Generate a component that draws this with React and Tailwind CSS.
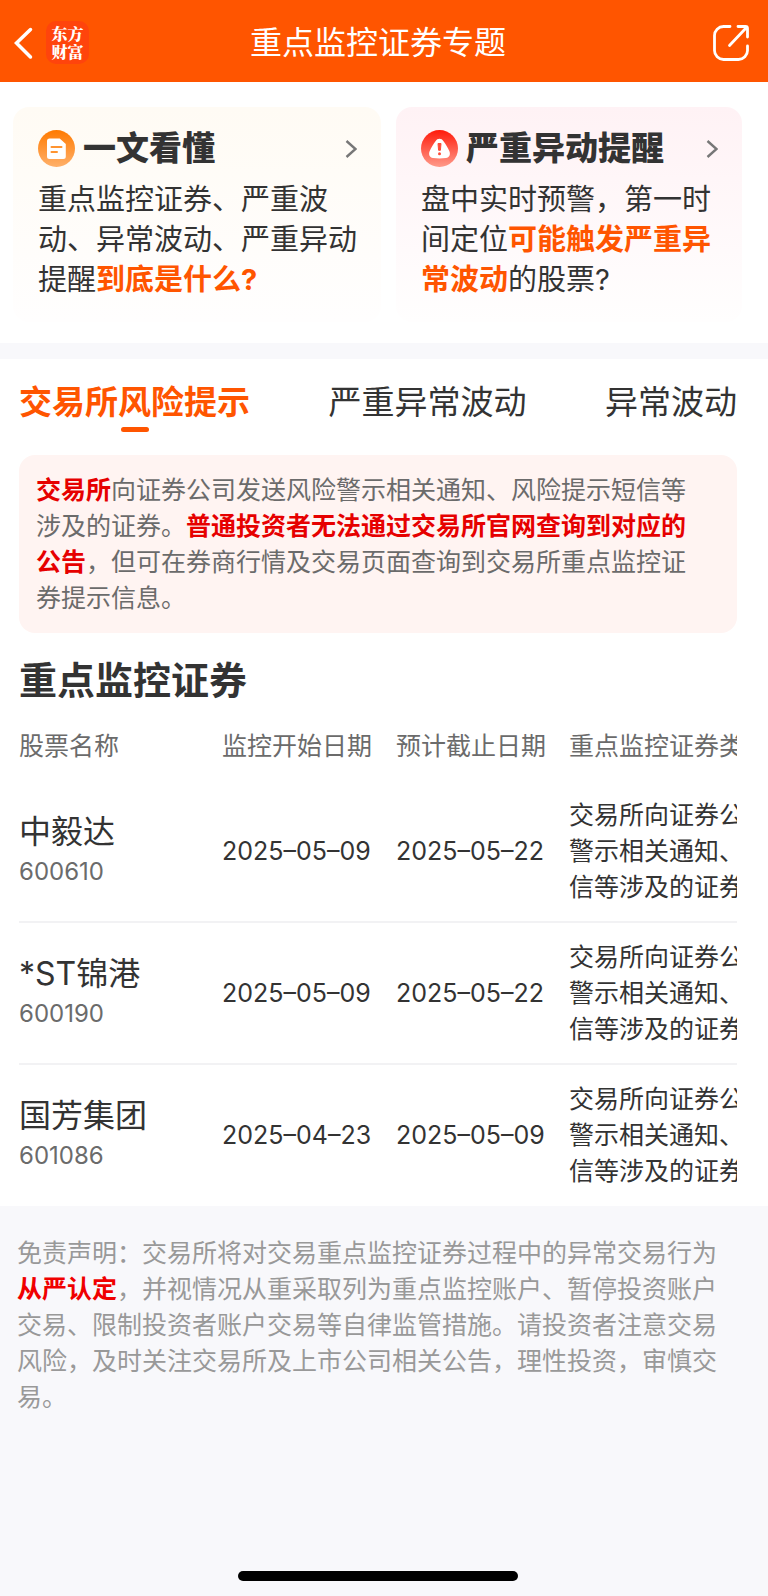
import React from 'react';

const tabs = ['交易所风险提示', '严重异常波动', '异常波动'];

const columns = ['股票名称', '监控开始日期', '预计截止日期', '重点监控证券类型'];

const reason = '交易所向证券公司发送风险警示相关通知、风险提示短信等涉及的证券';

const stocks = [
  { name: '中毅达', code: '600610', start: '2025–05–09', end: '2025–05–22' },
  { name: '*ST锦港', code: '600190', start: '2025–05–09', end: '2025–05–22' },
  { name: '国芳集团', code: '601086', start: '2025–04–23', end: '2025–05–09' },
];

const ArticleIcon = () => (
  <svg viewBox="0 0 37 37" className="h-[37px] w-[37px] shrink-0" aria-hidden="true">
    <defs>
      <linearGradient id="articleFill" x1="0" y1="0" x2="0" y2="1">
        <stop offset="0" stopColor="#ff7a00" />
        <stop offset="1" stopColor="#ffb06a" />
      </linearGradient>
    </defs>
    <circle cx="18.5" cy="18.5" r="18.5" fill="url(#articleFill)" />
    <path d="M11.5 8.5h10.2l6.1 5.6v12.4a2.5 2.5 0 0 1-2.5 2.5H11.5A2.5 2.5 0 0 1 9 26.5V11a2.5 2.5 0 0 1 2.5-2.5z" fill="#fff" />
    <path d="M13.5 17h10M13.5 22h5.5" stroke="#ff9430" strokeWidth="2" strokeLinecap="round" />
  </svg>
);

const AlertIcon = () => (
  <svg viewBox="0 0 37 37" className="h-[37px] w-[37px] shrink-0" aria-hidden="true">
    <defs>
      <linearGradient id="alertFill" x1="0" y1="0" x2="0" y2="1">
        <stop offset="0" stopColor="#ff1a0a" />
        <stop offset="1" stopColor="#ff9a8a" />
      </linearGradient>
    </defs>
    <circle cx="18.5" cy="18.5" r="18.5" fill="url(#alertFill)" />
    <path
      d="M14.5 11.2C16.3 7.9 20.7 7.9 22.5 11.2C24.7 14.3 26.8 17.6 28.3 21C29.8 24.6 28.3 27.6 25 28C20.8 28.5 16.2 28.5 12 28C8.7 27.6 7.2 24.6 8.7 21C10.2 17.6 12.3 14.3 14.5 11.2z"
      fill="#fff"
    />
    <path d="M17 13.5h3l-.6 6.8h-1.8z" fill="#ff4a38" stroke="#ff4a38" strokeLinejoin="round" />
    <circle cx="18.5" cy="23.7" r="1.5" fill="#ff4a38" />
  </svg>
);

const Chevron = () => (
  <svg viewBox="0 0 12 18" className="mr-1 ml-auto h-[18px] w-3 shrink-0" fill="none" aria-hidden="true">
    <path d="M1.5 1l9 8l-9 8" stroke="#777" strokeWidth="2.4" />
  </svg>
);

const InfoCard = ({ href, icon, title, className, children }) => (
  <a href={href} className={`block rounded-2xl pt-[23px] pr-5 pb-[22px] pl-[25px] ${className}`}>
    <div className="flex h-[37px] items-center">
      {icon}
      <h2 className="ml-2 text-[33px] leading-[37px] font-black">{title}</h2>
      <Chevron />
    </div>
    <p className="mt-[13px] text-[29px] leading-10">{children}</p>
  </a>
);

const Header = () => (
  <header className="flex h-[82px] items-center bg-[#ff5500] pt-[3px] pr-[18px] pl-3 text-white">
    <div className="flex flex-1 items-center">
      <button type="button" aria-label="返回" className="flex h-11 w-6 items-center">
        <svg viewBox="0 0 24 34" className="h-[34px] w-6" fill="none">
          <path d="M18.5 3.5L4.5 17l14 14" stroke="#fff" strokeWidth="3.5" strokeLinecap="round" />
        </svg>
      </button>
      <div className="ml-[10px] flex h-[43px] w-[43px] flex-col items-center justify-center rounded-[10px] bg-[#ff440c] font-['Noto_Serif_CJK_SC','Noto_Sans_CJK_SC',serif] text-[16px] leading-[18px] font-black">
        <span>东方</span>
        <span>财富</span>
      </div>
    </div>
    <h1 className="pr-1.5 text-[32px] leading-10">重点监控证券专题</h1>
    <div className="flex flex-1 justify-end">
      <button type="button" aria-label="分享">
        <svg viewBox="0 0 38 38" className="h-[38px] w-[38px]" fill="none" stroke="#fff" strokeWidth="2.8" strokeLinecap="round" strokeLinejoin="round">
          <path d="M18 2.5h-6.5a9 9 0 0 0-9 9v15a9 9 0 0 0 9 9h15a9 9 0 0 0 9-9V22" />
          <path d="M17.5 21.5L34 4M26 2.5h7.5a2 2 0 0 1 2 2V13" />
        </svg>
      </button>
    </div>
  </header>
);

const StockTable = () => (
  <div className="mt-6 overflow-x-auto [scrollbar-width:none]">
    <table className="w-[850px] table-fixed text-left text-[25px] leading-9">
      <colgroup>
        <col className="w-[203px]" />
        <col className="w-[174px]" />
        <col className="w-[173px]" />
        <col className="w-[300px]" />
      </colgroup>
      <thead>
        <tr className="text-[#6b6b6b]">
          {columns.map((column) => (
            <th key={column} className="pb-[17px] font-normal whitespace-nowrap">
              {column}
            </th>
          ))}
        </tr>
      </thead>
      <tbody>
        {stocks.map((stock) => (
          <tr key={stock.code} className="border-b-2 border-[#f2f2f4] last:border-b-0">
            <td>
              <div className="text-[32px] leading-[42px]">{stock.name}</div>
              <div className="text-[24px] leading-[38px] text-[#6b6b6b]">{stock.code}</div>
            </td>
            <td className="whitespace-nowrap">{stock.start}</td>
            <td className="whitespace-nowrap">{stock.end}</td>
            <td className="py-4">{reason}</td>
          </tr>
        ))}
      </tbody>
    </table>
  </div>
);

const App = () => {
  return (
    <div className="flex min-h-screen flex-col bg-[#f8f8fb] font-['Inter','Noto_Sans_CJK_SC',sans-serif] text-[#333]" lang="zh-CN">
      <Header />

      <section className="grid grid-cols-[368fr_346fr] gap-[15px] bg-white pt-[25px] pr-[26px] pb-[21px] pl-[13px]">
        <InfoCard href="#guide" icon={<ArticleIcon />} title="一文看懂" className="bg-linear-to-b from-[#fffbf4] to-[#fffefe]">
          重点监控证券、严重波动、异常波动、严重异动提醒
          <span className="font-bold text-[#ff5500]">到底是什么?</span>
        </InfoCard>
        <InfoCard href="#alerts" icon={<AlertIcon />} title="严重异动提醒" className="bg-linear-to-b from-[#fff2f5] to-[#fffefe]">
          盘中实时预警，第一时间定位
          <span className="font-bold text-[#ff5500]">可能触发严重异常波动</span>
          的股票?
        </InfoCard>
      </section>

      <main className="mt-4 bg-white pr-[31px] pb-px pl-[19px]">
        <div role="tablist" className="flex justify-between pt-[23px]">
          {tabs.map((tab, index) => (
            <button
              key={tab}
              type="button"
              role="tab"
              aria-selected={index === 0}
              className={`flex flex-col items-center text-[33px] leading-10 whitespace-nowrap ${index === 0 ? 'font-bold text-[#ff5500]' : ''}`}
            >
              {tab}
              {index === 0 && <span className="mt-[5px] h-[5px] w-7 rounded-full bg-[#ff5500]" />}
            </button>
          ))}
        </div>

        <p className="mt-[23px] rounded-2xl bg-[#fff4f2] py-[17px] pr-8 pl-[17px] text-[25px] leading-9 text-[#6b6b6b]">
          <strong className="font-bold text-[#e60000]">交易所</strong>
          向证券公司发送风险警示相关通知、风险提示短信等涉及的证券。
          <strong className="font-bold text-[#e60000]">普通投资者无法通过交易所官网查询到对应的公告</strong>
          ，但可在券商行情及交易页面查询到交易所重点监控证券提示信息。
        </p>

        <h2 className="mt-[23px] text-[38px] leading-[48px] font-bold">重点监控证券</h2>
        <StockTable />
      </main>

      <p className="pt-[29px] pr-[27px] pl-[17px] text-[25px] leading-9 text-[#999]">
        免责声明：交易所将对交易重点监控证券过程中的异常交易行为
        <strong className="font-bold text-[#f00000]">从严认定</strong>
        ，并视情况从重采取列为重点监控账户、暂停投资账户交易、限制投资者账户交易等自律监管措施。请投资者注意交易风险，及时关注交易所及上市公司相关公告，理性投资，审慎交易。
      </p>

      <div className="mt-auto flex justify-center pr-3 pb-[15px]">
        <div className="h-[10px] w-[280px] rounded-full bg-black" />
      </div>
    </div>
  );
};

export default App;
